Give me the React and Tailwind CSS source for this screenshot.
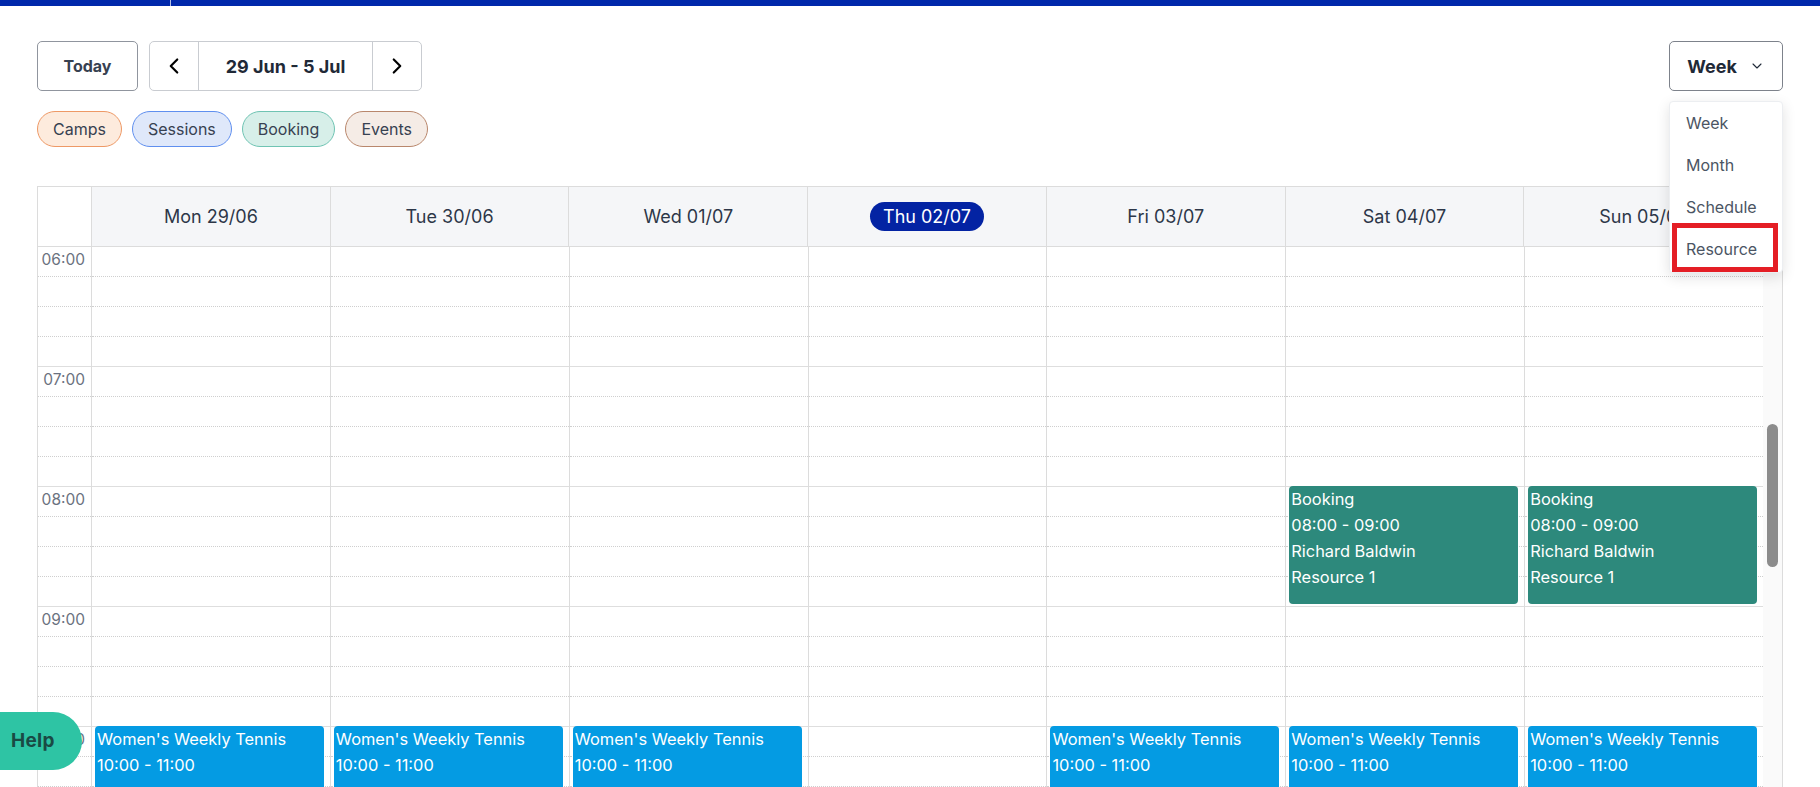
import React from 'react';
import { ChevronLeft, ChevronRight, ChevronDown } from 'lucide-react';

const DAYS = [
  { key: 'mon', label: 'Mon 29/06' },
  { key: 'tue', label: 'Tue 30/06' },
  { key: 'wed', label: 'Wed 01/07' },
  { key: 'thu', label: 'Thu 02/07', today: true },
  { key: 'fri', label: 'Fri 03/07' },
  { key: 'sat', label: 'Sat 04/07' },
  { key: 'sun', label: 'Sun 05/07' },
];

const HOURS = ['06:00', '07:00', '08:00', '09:00', '10:00', '11:00'];

const CHIPS = [
  { label: 'Camps', cls: 'bg-[#fdebdd] border-[#ee9966]' },
  { label: 'Sessions', cls: 'bg-[#dfe8fa] border-[#5f8fef]' },
  { label: 'Booking', cls: 'bg-[#d7efe9] border-[#6fc4b3]' },
  { label: 'Events', cls: 'bg-[#f5ece6] border-[#b9876c]' },
];

const tennis = { start: 10, lines: ["Women's Weekly Tennis", '10:00 - 11:00'], color: 'bg-[#049be3]' };
const booking = {
  start: 8,
  lines: ['Booking', '08:00 - 09:00', 'Richard Baldwin', 'Resource 1'],
  color: 'bg-[#2d897c]',
};

const EVENTS = {
  mon: [tennis],
  tue: [tennis],
  wed: [tennis],
  thu: [],
  fri: [tennis],
  sat: [booking, tennis],
  sun: [booking, tennis],
};

const VIEWS = ['Week', 'Month', 'Schedule', 'Resource'];

// one hour = 4 slots of 30px, dotted inside the hour, solid on the hour
function HourSlots({ label }) {
  return (
    <div>
      {[0, 1, 2, 3].map((i) => (
        <div
          key={i}
          className={`h-[30px] border-b ${
            i === 3 ? 'border-solid border-[#dedede]' : 'border-dotted border-[#cfcfcf]'
          }`}
        >
          {label && i === 0 && (
            <div className="pt-[3px] pr-[6px] text-right text-[15.5px] leading-[20px] text-[#6b7280]">{label}</div>
          )}
        </div>
      ))}
    </div>
  );
}

export default function App() {
  return (
    <div
      className="relative h-[787px] overflow-hidden bg-white text-[#374151]"
      style={{ fontFamily: 'Inter, "Noto Sans", sans-serif' }}
    >
      {/* Top bar */}
      <div className="flex h-[6px] bg-[#0028ab]">
        <div className="w-[171px] border-r border-white/70" />
      </div>

      <div className="px-[37px]">
        {/* Toolbar */}
        <div className="flex items-start justify-between pt-[35px]">
          <div className="flex gap-[11px]">
            <button className="h-[50px] w-[101px] rounded-[5px] border border-[#90959e] text-[16px] font-bold text-[#374151]">
              Today
            </button>
            <div className="flex h-[50px] w-[273px] rounded-[5px] border border-[#c9ccd1]">
              <div className="flex w-[49px] items-center justify-center border-r border-[#c9ccd1] text-black">
                <ChevronLeft size={26} strokeWidth={2} />
              </div>
              <div className="flex flex-1 items-center justify-center text-[18px] font-bold text-[#1f2937]">
                29 Jun - 5 Jul
              </div>
              <div className="flex w-[49px] items-center justify-center border-l border-[#c9ccd1] text-black">
                <ChevronRight size={26} strokeWidth={2} />
              </div>
            </div>
          </div>

          <div className="relative">
            <button className="flex h-[50px] w-[114px] items-center justify-center gap-[12px] rounded-[5px] border border-[#7d828b] text-[18px] font-bold text-[#1f2937]">
              Week
              <ChevronDown size={16} strokeWidth={1.6} />
            </button>
            {/* Dropdown */}
            <div className="absolute right-0 top-[60px] z-20 w-[114px] rounded-[4px] border border-[#eceef1] bg-white pb-[2px] shadow-[0_4px_14px_rgba(0,0,0,0.12)]">
              {VIEWS.map((v) => (
                <div key={v} className="flex h-[42px] items-center pl-[16px] text-[16px] text-[#4b5563]">
                  {v}
                </div>
              ))}
              <div className="absolute left-[2px] top-[121px] h-[49px] w-[106px] border-[5px] border-[#e41e25]" />
            </div>
          </div>
        </div>

        {/* Filter chips */}
        <div className="mt-[20px] flex gap-[10px]">
          {CHIPS.map((c) => (
            <span
              key={c.label}
              className={`flex h-[36px] items-center rounded-full border px-[15px] text-[16px] text-[#374151] ${c.cls}`}
            >
              {c.label}
            </span>
          ))}
        </div>

        {/* Calendar */}
        <div className="mt-[39px] border border-[#dcdcdc]">
          {/* Header */}
          <div className="flex h-[60px] border-b border-[#dcdcdc] bg-[#f5f6f8]">
            <div className="w-[54px] border-r border-[#dcdcdc] bg-white" />
            {DAYS.map((d) => (
              <div
                key={d.key}
                className="flex flex-1 items-center justify-center border-r border-[#dcdcdc] text-[18px] text-[#2d3748] last:border-r-0"
              >
                {d.today ? (
                  <span className="rounded-full bg-[#0323a3] px-[13px] py-[2px] leading-[25px] text-white">
                    {d.label}
                  </span>
                ) : (
                  d.label
                )}
              </div>
            ))}
            <div className="w-[19px] border-l border-[#dcdcdc]" />
          </div>

          {/* Body */}
          <div className="flex">
            <div className="w-[54px] border-r border-[#dcdcdc]">
              {HOURS.map((h) => (
                <HourSlots key={h} label={h} />
              ))}
            </div>
            {DAYS.map((d, i) => (
              <div key={d.key} className={`relative flex-1 ${i < 6 ? 'border-r border-[#dcdcdc]' : ''}`}>
                {HOURS.map((h) => (
                  <HourSlots key={h} />
                ))}
                {EVENTS[d.key].map((ev) => (
                  <div
                    key={ev.start}
                    className={`absolute left-[3px] right-[6px] h-[118px] rounded-[4px] px-[2px] text-[16.4px] leading-[26px] text-white ${ev.color}`}
                    style={{ top: (ev.start - 6) * 120 - 1 }}
                  >
                    {ev.lines.map((l) => (
                      <div key={l} className="truncate">
                        {l}
                      </div>
                    ))}
                  </div>
                ))}
              </div>
            ))}
            {/* Scrollbar */}
            <div className="w-[19px] bg-[#fafafa] pt-[177px]">
              <div className="ml-[4px] h-[143px] w-[11px] rounded-full bg-[#8c8c8c]" />
            </div>
          </div>
        </div>
      </div>

      {/* Help button */}
      <button className="absolute left-0 top-[712px] z-30 flex h-[58px] w-[82px] items-center rounded-r-[30px] bg-[#2ec4a4] pl-[11px] text-[19px] font-bold tracking-[0.3px] text-[#1a4a44]">
        Help
      </button>
    </div>
  );
}
